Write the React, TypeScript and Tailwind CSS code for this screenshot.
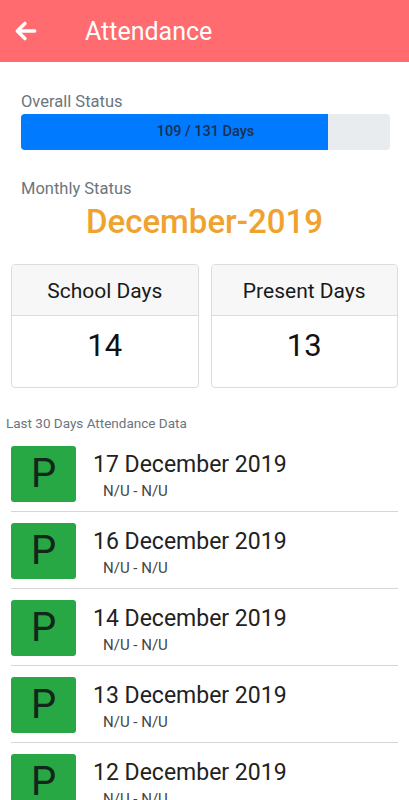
import React from "react";

const days = ["17", "16", "14", "13", "12"];

export default function App() {
  return (
    <div className="w-[409px] h-[800px] overflow-hidden bg-white" style={{ fontFamily: "Roboto, 'Noto Sans', sans-serif" }}>
      <div className="h-[62px] bg-[#ff6b6f] flex items-center">
        <svg className="ml-[13px]" width="26" height="26" viewBox="0 0 24 24" fill="none" stroke="white" strokeWidth="3.2" strokeLinecap="round" strokeLinejoin="round">
          <path d="M20 12H5" />
          <path d="M11 5l-7 7 7 7" />
        </svg>
        <div className="ml-[46px] text-white text-[25px] leading-none">Attendance</div>
      </div>

      <div className="px-[21px] pt-[29px]">
        <div className="text-[16.5px] leading-[21px] text-[#6c757d]">Overall Status</div>
        <div className="relative mt-[2px] h-[36px] w-[369px] rounded-[4px] bg-[#e9ecef] overflow-hidden">
          <div className="h-full bg-[#007bff]" style={{ width: `${(109 / 131) * 100}%` }} />
          <div className="absolute inset-0 flex items-center justify-center text-[14.5px] font-medium text-[#1c2f4f]">109 / 131 Days</div>
        </div>
        <div className="mt-[28px] text-[16.5px] leading-[21px] text-[#6c757d]">Monthly Status</div>
        <div className="mt-[4px] text-center text-[33px] leading-[38px] font-medium text-[#f0a22e]">December-2019</div>
      </div>

      <div className="mt-[23px] px-[11px] grid grid-cols-2 gap-[12px]">
        {[
          ["School Days", "14"],
          ["Present Days", "13"],
        ].map(([t, n]) => (
          <div key={t} className="border border-[#dcdcdc] rounded-[4px] overflow-hidden">
            <div className="h-[51px] pt-[3px] bg-[#f7f7f7] border-b border-[#dcdcdc] flex items-center justify-center text-[21px] text-[#1a1a1a]">{t}</div>
            <div className="h-[71px] flex justify-center pt-[11px] text-[31px] leading-[38px] text-[#111]">{n}</div>
          </div>
        ))}
      </div>

      <div className="mt-[27px] px-[6px] text-[13.5px] leading-[16px] text-[#6c757d]">Last 30 Days Attendance Data</div>

      <div className="px-[11px] pt-[4px]">
        {days.map((d) => (
          <div key={d} className="flex pt-[11px] pb-[9px] border-b border-[#d6d6d6]">
            <div className="w-[65px] h-[56px] rounded-[3px] bg-[#28a745] flex items-center justify-center text-[40px] text-[#13261a] leading-none">P</div>
            <div className="ml-[17px] pt-[5px]">
              <div className="text-[23px] leading-[28px] text-[#222]">{d} December 2019</div>
              <div className="mt-[3px] ml-[10px] text-[15px] leading-[18px] text-[#444]">N/U - N/U</div>
            </div>
          </div>
        ))}
      </div>
    </div>
  );
}
